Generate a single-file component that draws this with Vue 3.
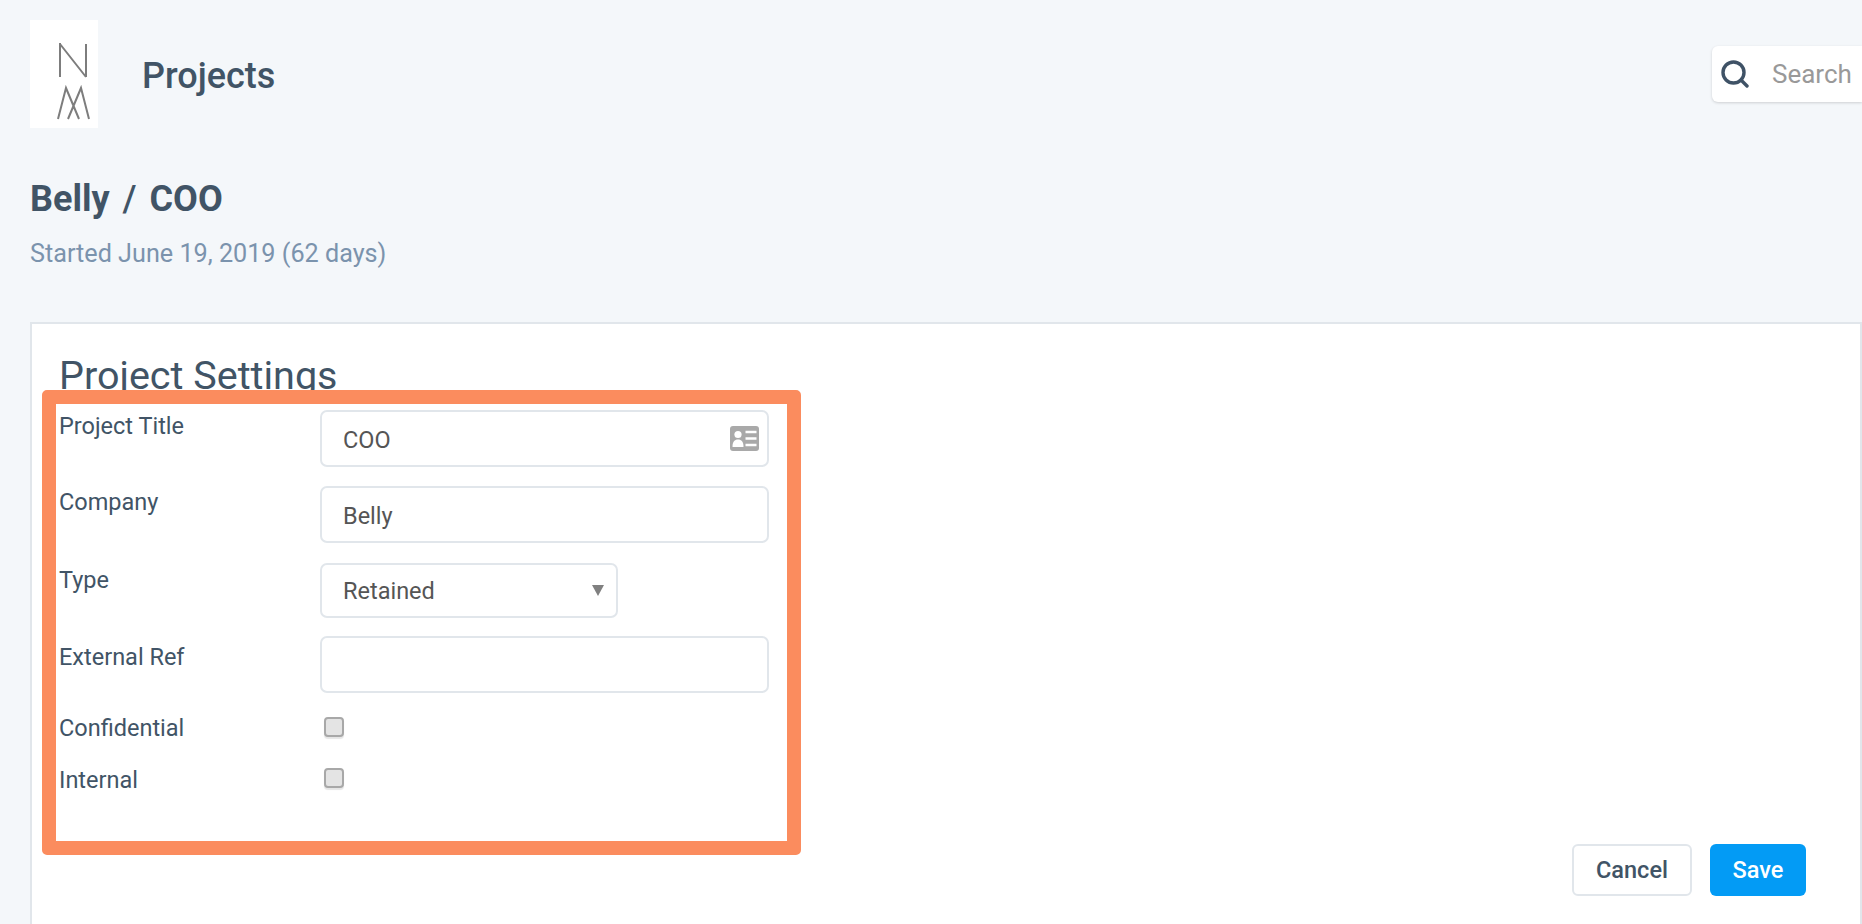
<script setup>
const started = 'Started June 19, 2019 (62 days)'
</script>

<template>
  <div class="page">
    <header class="top">
      <div class="logo">
        <svg width="68" height="108" viewBox="0 0 68 108" fill="none" stroke="#7d7d7d" stroke-width="2">
          <path d="M30 23V57M30 24L56 57M56 24V57" />
          <path d="M28 99L36 68L49 99M38 99L51 68L59 99" />
        </svg>
      </div>
      <h1 class="brand">Projects</h1>
      <div class="search">
        <svg class="search-icon" width="28" height="28" viewBox="0 0 28 28" fill="none" stroke="#3f5266">
          <circle cx="12.5" cy="12.5" r="10.5" stroke-width="3.4" />
          <path d="M20 20L26 26" stroke-width="3.4" stroke-linecap="round" />
        </svg>
        <span class="search-text">Search</span>
      </div>
    </header>

    <h2 class="title">Belly <span class="slash">/</span> COO</h2>
    <p class="sub">{{ started }}</p>

    <section class="card">
      <h3 class="card-title">Project Settings</h3>
      <div class="form">
        <div class="row row-a">
          <label class="label">Project Title</label>
          <div class="field">
            <input class="input" value="COO" />
            <svg class="id-icon" width="29" height="25" viewBox="0 0 29 25">
              <rect width="29" height="25" rx="3" fill="#a9a9a9" />
              <circle cx="8" cy="8.5" r="3.6" fill="#fff" />
              <path d="M2.500 21c0-5.500 2-7.500 5.500-7.500s5.500 2 5.500 7.500z" fill="#fff" />
              <path d="M15.500 6h11M15.500 12.500h11M15.500 19h11" stroke="#fff" stroke-width="2.500" />
            </svg>
          </div>
        </div>
        <div class="row row-b">
          <label class="label">Company</label>
          <div class="field"><input class="input" value="Belly" /></div>
        </div>
        <div class="row row-c">
          <label class="label">Type</label>
          <div class="field narrow">
            <select class="input select">
              <option>Retained</option>
            </select>
            <svg class="caret" width="12" height="11" viewBox="0 0 12 11"><path d="M0 0H12L6 11z" fill="#808080" /></svg>
          </div>
        </div>
        <div class="row row-d">
          <label class="label">External Ref</label>
          <div class="field"><input class="input" value="" /></div>
        </div>
        <div class="row row-check first">
          <label class="label">Confidential</label>
          <input class="check" type="checkbox" />
        </div>
        <div class="row row-check last">
          <label class="label">Internal</label>
          <input class="check" type="checkbox" />
        </div>
      </div>
      <div class="actions">
        <button class="btn cancel">Cancel</button>
        <button class="btn save">Save</button>
      </div>
      <div class="highlight"></div>
    </section>
  </div>
</template>

<style scoped>
.page {
  box-sizing: border-box;
  height: 924px;
  overflow: hidden;
  background: #f4f7fa;
  padding: 20px 0 0 30px;
  font-family: Roboto, "Liberation Sans", sans-serif;
  color: #415466;
}
.top {
  display: flex;
  align-items: center;
  height: 108px;
}
.logo {
  width: 68px;
  height: 108px;
  background: #fff;
  flex: none;
}
.logo svg { display: block; }
.brand {
  margin: 4px 0 0 44px;
  font-size: 36px;
  font-weight: 500;
  line-height: 40px;
}
.search {
  margin-left: auto;
  width: 150px;
  height: 56px;
  box-sizing: border-box;
  background: #fff;
  border-radius: 6px 0 0 6px;
  box-shadow: 0 1px 3px rgba(0, 0, 0, 0.16);
  display: flex;
  align-items: center;
  padding-left: 9px;
}
.search-text {
  margin-left: 23px;
  font-size: 26px;
  color: #999;
}
.title {
  margin: 49px 0 0 0;
  font-size: 36px;
  font-weight: 700;
  line-height: 44px;
}
.slash {
  font-weight: 500;
  margin: 0 4px;
}
.sub {
  margin: 19px 0 0 0;
  font-size: 25.200px;
  line-height: 28px;
  color: #7b93ad;
}
.card {
  position: relative;
  box-sizing: border-box;
  margin-top: 54px;
  width: 1832px;
  height: 700px;
  background: #fff;
  border: 2px solid #e1e6eb;
  padding: 0 0 0 27px;
}
.card-title {
  margin: 0;
  padding: 30px 0 0 0;
  font-size: 39.500px;
  font-weight: 400;
  line-height: 44px;
}
.form {
  margin-top: 11px;
}
.row {
  display: grid;
  grid-template-columns: 261px 449px;
  margin-bottom: 20px;
}
.row-a { padding-top: 1px; margin-bottom: 19px; }
.row-a .label { padding-top: 3px; }
.row-b .label { padding-top: 3px; }
.row-c { padding-top: 1px; margin-bottom: 19px; }
.row-c .label { padding-top: 4px; }
.row-d .label { padding-top: 8px; }
.label {
  font-size: 23.500px;
  line-height: 26px;
  display: block;
}
.field {
  position: relative;
  display: flex;
}
.narrow { width: 298px; }
.input {
  box-sizing: border-box;
  width: 100%;
  height: 57px;
  border: 2px solid #e1e6eb;
  border-radius: 7px;
  background: #fff;
  padding: 3px 21px 0;
  font: 23.500px Roboto, "Liberation Sans", sans-serif;
  color: #555;
  outline: none;
}
.row-b .input, .row-d .input { margin-bottom: -1px; }
.select {
  height: 55px;
  margin-bottom: -1px;
  padding-top: 1px;
  appearance: none;
  -webkit-appearance: none;
}
.id-icon {
  position: absolute;
  right: 10px;
  top: 16px;
}
.caret {
  position: absolute;
  right: 14px;
  top: 22px;
}
.row-check { margin-bottom: 30px; align-items: center; height: 20px; }
.first { margin-top: 21px; }
.first .label { margin-top: 2px; }
.last .label { margin-top: 4px; }
.check {
  appearance: none;
  -webkit-appearance: none;
  margin: 0 0 0 4px;
  width: 20px;
  height: 20px;
  box-sizing: border-box;
  border: 2px solid #a8a8a8;
  border-radius: 4px;
  background: #e4e4e4;
  box-shadow: 0 2px 1px rgba(0, 0, 0, 0.1);
}
.actions {
  display: flex;
  justify-content: flex-end;
  gap: 18px;
  padding-right: 54px;
  margin-top: 61px;
}
.btn {
  height: 52px;
  box-sizing: border-box;
  border-radius: 6px;
  font: 500 23.500px Roboto, "Liberation Sans", sans-serif;
  padding: 0;
}
.cancel {
  width: 120px;
  background: #fff;
  border: 2px solid #e1e6eb;
  color: #415466;
}
.save {
  width: 96px;
  background: #039bf5;
  border: 0;
  color: #fff;
}
.highlight {
  position: absolute;
  left: 10px;
  top: 66px;
  width: 759px;
  height: 465px;
  box-sizing: border-box;
  border: 14px solid #fb8c5e;
  border-radius: 5px;
  pointer-events: none;
}
</style>
